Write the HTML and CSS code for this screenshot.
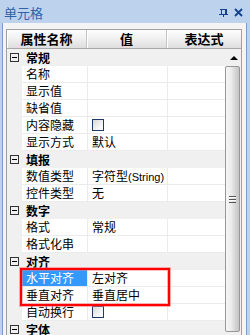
FILE: index.html
```html
<!DOCTYPE html>
<html lang="zh-CN">
<head>
  <meta charset="UTF-8">
  <title>单元格</title>
  <link rel="stylesheet" href="styles.css">
</head>
<body>
  <div class="pane">
    <div class="titlebar">
      <span class="title">单元格</span>
      <span class="tools">
        <svg class="pin" width="9" height="9" viewBox="0 0 9 9">
          <path d="M1 1h6M2 1v5M6 1v5M7 1v5M0 6h9M4 6v3" stroke="#15428b" stroke-width="1" fill="none" shape-rendering="crispEdges"/>
        </svg>
        <svg class="close" width="9" height="9" viewBox="0 0 9 9">
          <path d="M1 1l7 7M8 1l-7 7" stroke="#15428b" stroke-width="1.8" fill="none"/>
        </svg>
      </span>
    </div>

    <div class="frame">
      <div class="grid">
        <div class="head">
          <div class="hcell">属性名称</div>
          <div class="hcell">值</div>
          <div class="hcell">表达式</div>
        </div>

        <div class="body">
          <div class="rows">
            <div class="group"><span class="toggle"></span>常规</div>
            <div class="row"><span class="gutter"></span><span class="name">名称</span><span class="val"></span><span class="expr"></span></div>
            <div class="row"><span class="gutter"></span><span class="name">显示值</span><span class="val"></span><span class="expr"></span></div>
            <div class="row"><span class="gutter"></span><span class="name">缺省值</span><span class="val"></span><span class="expr"></span></div>
            <div class="row"><span class="gutter"></span><span class="name">内容隐藏</span><span class="val"><span class="check"></span></span><span class="expr"></span></div>
            <div class="row"><span class="gutter"></span><span class="name">显示方式</span><span class="val">默认</span><span class="expr"></span></div>

            <div class="group"><span class="toggle"></span>填报</div>
            <div class="row"><span class="gutter"></span><span class="name">数值类型</span><span class="val">字符型<span class="latin">(String)</span></span><span class="expr"></span></div>
            <div class="row"><span class="gutter"></span><span class="name">控件类型</span><span class="val">无</span><span class="expr"></span></div>

            <div class="group"><span class="toggle"></span>数字</div>
            <div class="row"><span class="gutter"></span><span class="name">格式</span><span class="val">常规</span><span class="expr"></span></div>
            <div class="row"><span class="gutter"></span><span class="name">格式化串</span><span class="val"></span><span class="expr"></span></div>

            <div class="group"><span class="toggle"></span>对齐</div>
            <div class="row"><span class="gutter"></span><span class="name selected">水平对齐</span><span class="val">左对齐</span><span class="expr"></span></div>
            <div class="row"><span class="gutter"></span><span class="name">垂直对齐</span><span class="val">垂直居中</span><span class="expr"></span></div>
            <div class="row"><span class="gutter"></span><span class="name">自动换行</span><span class="val"><span class="check"></span></span><span class="expr"></span></div>

            <div class="group"><span class="toggle"></span>字体</div>

            <div class="mark"></div>
          </div>

          <div class="scrollbar">
            <div class="sb-up"><span class="arrow"></span></div>
            <div class="sb-thumb"><span class="grip"></span></div>
          </div>
        </div>
      </div>
    </div>
  </div>
</body>
</html>
```

FILE: styles.css
```css
html, body {
  margin: 0;
  padding: 0;
}
body {
  width: 250px;
  height: 335px;
  overflow: hidden;
  font-family: "Noto Sans CJK SC", "Liberation Sans", sans-serif;
  font-size: 12px;
  color: #000;
}
.pane {
  display: flex;
  flex-direction: column;
  height: 335px;
  background: #bcd2ed;
}
.titlebar {
  height: 23px;
  flex: none;
  display: flex;
  align-items: center;
  justify-content: space-between;
  padding: 1px 7px 0 4px;
  box-sizing: border-box;
}
.title {
  font-size: 13px;
  color: #2f62a8;
}
.tools {
  display: flex;
  align-items: center;
  gap: 6px;
}
.tools svg {
  display: block;
}
.frame {
  flex: 1;
  margin: 0 3px 0 2px;
  border-left: 1px solid #7d9dc9;
  border-right: 1px solid #7d9dc9;
  background: #f4f4f4;
  padding: 6px 4px 0 3px;
  overflow: hidden;
}
.grid {
  width: 236px;
  border: 1px solid #a0a0a0;
  border-bottom: none;
  box-sizing: border-box;
  background: #fff;
}
.head {
  display: grid;
  grid-template-columns: 80px 80px 1fr;
  height: 19px;
  border-bottom: 1px solid #a9a9a9;
  box-sizing: border-box;
  background: linear-gradient(#fdfdfd, #f1f1f1 45%, #dedede);
}
.hcell {
  font-size: 13px;
  font-weight: bold;
  text-align: center;
  line-height: 18px;
  border-right: 1px solid #c4c4c4;
  box-shadow: inset 1px 0 0 #fff;
}
.hcell:last-child {
  border-right: none;
}
.body {
  display: flex;
}
.rows {
  position: relative;
  width: 218px;
}
.group {
  height: 17px;
  line-height: 17px;
  background: #f0f0f0;
  font-weight: bold;
  display: flex;
  align-items: center;
  padding-left: 3px;
}
.toggle {
  width: 9px;
  height: 9px;
  box-sizing: border-box;
  border: 1px solid #333;
  margin-right: 7px;
  position: relative;
}
.toggle::after {
  content: "";
  position: absolute;
  left: 1px;
  top: 3px;
  width: 5px;
  height: 1px;
  background: #000;
}
.row {
  display: grid;
  grid-template-columns: 15px 66px 80px 1fr;
  height: 17px;
}
.row > span {
  box-sizing: border-box;
  line-height: 16px;
  white-space: nowrap;
  overflow: hidden;
}
.gutter {
  background: #f0f0f0;
}
.name, .val, .expr {
  background: #fff;
  border-bottom: 1px solid #ebebeb;
  padding-left: 4px;
}
.name, .val {
  border-right: 1px solid #ebebeb;
}
.name.selected {
  background: #3399ff;
  color: #fff;
}
.latin {
  font-family: "Liberation Sans", sans-serif;
  font-size: 11px;
}
.check {
  display: inline-block;
  width: 12px;
  height: 12px;
  margin-top: 2px;
  box-sizing: border-box;
  border: 1px solid #1f3b63;
  background: linear-gradient(135deg, #d8d8d8, #f4f4f4 60%, #fff);
  vertical-align: top;
}
.mark {
  position: absolute;
  left: 13px;
  top: 219px;
  width: 150px;
  height: 38px;
  box-sizing: border-box;
  border: 2px solid #ff0000;
  box-shadow: 0 0 0 1px rgba(255, 110, 110, 0.55), inset 0 0 0 1px rgba(255, 110, 110, 0.45);
}
.scrollbar {
  width: 16px;
  display: flex;
  flex-direction: column;
  background: #f0f0f0;
}
.sb-up {
  height: 17px;
  display: flex;
  align-items: center;
  justify-content: center;
}
.arrow {
  width: 0;
  height: 0;
  border-left: 4px solid transparent;
  border-right: 4px solid transparent;
  border-bottom: 4px solid #000;
  margin-left: 2px;
}
.sb-thumb {
  height: 266px;
  width: 15px;
  box-sizing: border-box;
  border: 1px solid #979797;
  border-radius: 2px;
  background: linear-gradient(to right, #f6f6f6, #ececec 40%, #d6d6d6 70%, #c4c4c4);
  display: flex;
  align-items: center;
  justify-content: center;
}
.grip {
  width: 7px;
  height: 7px;
  background: repeating-linear-gradient(#555 0 1px, #fff 1px 2px, transparent 2px 3px);
}
```
